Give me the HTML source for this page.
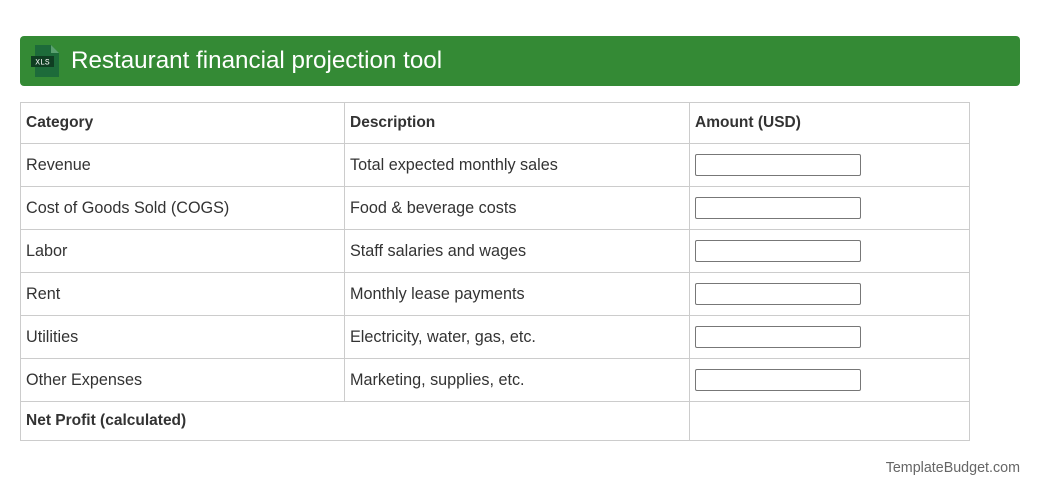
<!DOCTYPE html>
<html><head><style>
body{margin:0;background:#fff;font-family:"Liberation Sans",Arial,sans-serif;color:#333;}
.hdr{position:absolute;left:20px;top:36px;width:1000px;height:50px;background:#348a35;border-radius:4px;}
.hdr .t{position:absolute;left:51px;top:11px;color:#fff;font-size:24.2px;}
table{position:absolute;left:20px;top:102px;border-collapse:collapse;width:950px;font-size:16.2px;}
td{border:1px solid #ccc;padding:0 5px;height:42px;}
tr.h td{font-weight:bold;height:40px;font-size:15.5px;}
tr.f td{font-weight:bold;height:38px;font-size:15.5px;}
input{width:164px;height:20px;border:1px solid #777;border-radius:2px;margin:-1px 0 0 0;padding:0;display:block;}
.ft{position:absolute;right:20px;top:460px;font-size:14.3px;color:#666;}
</style></head><body>
<div class="hdr">
<svg style="position:absolute;left:11px;top:9px" width="30" height="32" viewBox="0 0 30 32">
<path d="M4 0H20L28 8V32H4Z" fill="#1d6b3a"/><path d="M20 0V8H28Z" fill="#5aa070"/>
<rect x="0" y="11" width="23" height="11" fill="#0f3d22"/>
<text x="11.5" y="19.5" font-size="8" fill="#fff" text-anchor="middle" font-family="Liberation Mono,monospace">XLS</text>
</svg>
<div class="t">Restaurant financial projection tool</div>
</div>
<table>
<col style="width:324px"><col style="width:345px"><col>
<tr class="h"><td>Category</td><td>Description</td><td>Amount (USD)</td></tr>
<tr><td>Revenue</td><td>Total expected monthly sales</td><td><input></td></tr>
<tr><td>Cost of Goods Sold (COGS)</td><td>Food &amp; beverage costs</td><td><input></td></tr>
<tr><td>Labor</td><td>Staff salaries and wages</td><td><input></td></tr>
<tr><td>Rent</td><td>Monthly lease payments</td><td><input></td></tr>
<tr><td>Utilities</td><td>Electricity, water, gas, etc.</td><td><input></td></tr>
<tr><td>Other Expenses</td><td>Marketing, supplies, etc.</td><td><input></td></tr>
<tr class="f"><td colspan="2">Net Profit (calculated)</td><td></td></tr>
</table>
<div class="ft">TemplateBudget.com</div>
</body></html>
